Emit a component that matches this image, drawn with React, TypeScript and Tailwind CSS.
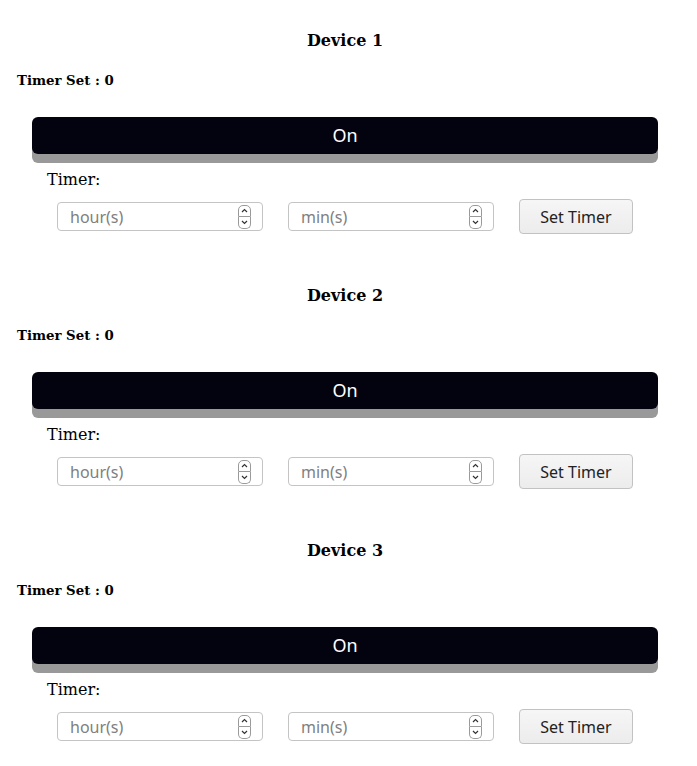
import React, { useState } from 'react';

const devices = [1, 2, 3];

const Spinner: React.FC = () => (
  <div className="absolute right-[12px] top-1/2 -translate-y-1/2 flex flex-col">
    <span className="w-[13px] h-[12px] border border-[#9a9a9a] rounded-t-[5px] flex items-center justify-center">
      <svg width="7" height="5" viewBox="0 0 7 5"><path d="M1 4 L3.5 1.5 L6 4" fill="none" stroke="#333" strokeWidth="1.2" /></svg>
    </span>
    <span className="w-[13px] h-[12px] border border-t-0 border-[#9a9a9a] rounded-b-[5px] flex items-center justify-center">
      <svg width="7" height="5" viewBox="0 0 7 5"><path d="M1 1 L3.5 3.5 L6 1" fill="none" stroke="#333" strokeWidth="1.2" /></svg>
    </span>
  </div>
);

const TimeInput: React.FC<{ placeholder: string }> = ({ placeholder }) => (
  <div className="relative w-[206px] h-[29px]">
    <input
      type="text"
      placeholder={placeholder}
      className="w-full h-full border border-[#c4c4c4] rounded-[4px] pl-[12px] pr-[30px] text-[16px] text-[#333] placeholder:text-[#808080] outline-none bg-white"
      style={{ fontFamily: '"Noto Sans", sans-serif' }}
    />
    <Spinner />
  </div>
);

const DeviceCard: React.FC<{ id: number }> = ({ id }) => {
  const [on, setOn] = useState(true);
  const [timerSet] = useState(0);

  return (
    <div className="pb-[52px]" style={{ fontFamily: '"DejaVu Serif", serif' }}>
      <h3 className="text-center text-[16px] font-bold leading-[20px] text-black">Device {id}</h3>
      <h5 className="mt-[22px] ml-[17px] text-[13.3px] font-bold leading-[16px] text-black">Timer Set : {timerSet}</h5>

      <div className="px-[32px] mt-[28px]">
        <button
          onClick={() => setOn(!on)}
          className="w-full h-[37px] rounded-[6px] bg-[#03020f] text-white text-[18px] shadow-[0_9px_0_#999]"
          style={{ fontFamily: '"Noto Sans", sans-serif' }}
        >
          {on ? 'On' : 'Off'}
        </button>
      </div>

      <p className="mt-[16px] ml-[47px] text-[16px] leading-[20px] text-black">Timer:</p>

      <div className="mt-[9px] ml-[57px] flex items-center gap-[25px]">
        <TimeInput placeholder="hour(s)" />
        <TimeInput placeholder="min(s)" />
        <button
          className="w-[114px] h-[35px] border border-[#c2c2c2] rounded-[4px] bg-gradient-to-b from-[#f6f6f6] to-[#ececec] text-[16px] text-[#222]"
          style={{ fontFamily: '"Noto Sans", sans-serif' }}
        >
          Set Timer
        </button>
      </div>
    </div>
  );
};

const App: React.FC = () => {
  return (
    <div className="w-[690px] bg-white pt-[31px]">
      {devices.map((d) => (
        <DeviceCard key={d} id={d} />
      ))}
    </div>
  );
};

export default App;
